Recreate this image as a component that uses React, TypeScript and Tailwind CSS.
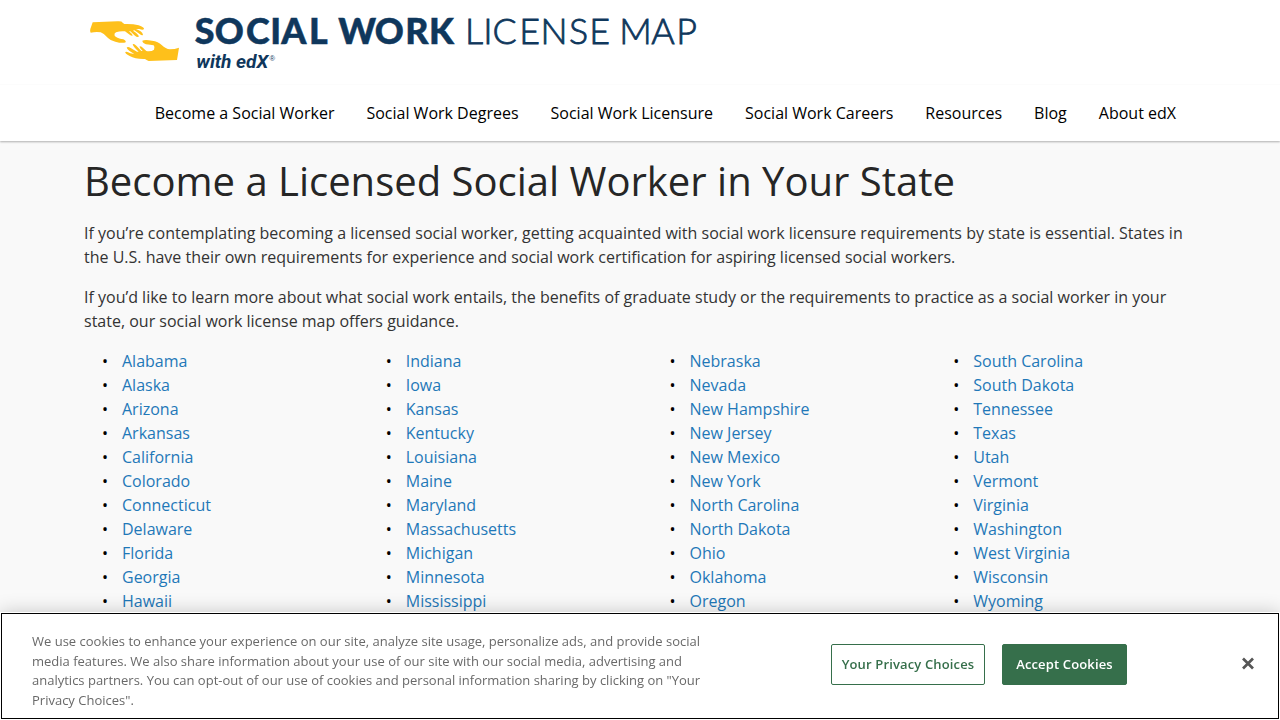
const NAV_ITEMS = [
  'Become a Social Worker',
  'Social Work Degrees',
  'Social Work Licensure',
  'Social Work Careers',
  'Resources',
  'Blog',
  'About edX',
];

const STATE_COLUMNS = [
  ['Alabama', 'Alaska', 'Arizona', 'Arkansas', 'California', 'Colorado', 'Connecticut', 'Delaware', 'Florida', 'Georgia', 'Hawaii'],
  ['Indiana', 'Iowa', 'Kansas', 'Kentucky', 'Louisiana', 'Maine', 'Maryland', 'Massachusetts', 'Michigan', 'Minnesota', 'Mississippi'],
  ['Nebraska', 'Nevada', 'New Hampshire', 'New Jersey', 'New Mexico', 'New York', 'North Carolina', 'North Dakota', 'Ohio', 'Oklahoma', 'Oregon'],
  ['South Carolina', 'South Dakota', 'Tennessee', 'Texas', 'Utah', 'Vermont', 'Virginia', 'Washington', 'West Virginia', 'Wisconsin', 'Wyoming'],
];

function Logo() {
  return (
    <svg width="620" height="65" viewBox="0 0 620 65" role="img" aria-label="Social Work License Map">
      {/* hands */}
      <g transform="scale(0.33333)" fill="#fec01b">
        <path d="M38 37 L112 34 Q126 33 128 38 L133 42 Q158 41 176 46 Q193 52 192 57 Q189 61 178 57 L168 57 Q187 64 189 74 Q187 79 179 72 L163 61 L159 62 Q174 72 177 79 Q173 84 165 77 L151 64 L147 64 Q157 72 158 77 Q153 79 146 72 L135 64 Q121 62 108 67 Q101 71 104 77 Q108 84 130 88 Q139 93 137 97 Q127 101 106 95 Q91 92 84 84 Q75 72 62 67 Q48 65 32 68 Q29 65 31 57 Z" />
        <path d="M297 113 L291 150 L206 153 Q199 150 195 147 Q166 148 149 138 Q134 130 136 126 Q140 123 151 130 L163 132 Q144 121 140 113 Q143 108 152 114 L171 125 L176 125 Q159 110 158 103 Q162 100 169 107 L184 123 L188 123 Q178 114 179 109 Q184 108 190 115 L199 123 Q214 125 222 119 Q226 112 221 106 Q211 104 198 103 Q187 98 187 92 Q195 88 216 92 Q235 94 245 105 Q257 117 270 118 Q284 118 297 113 Z" />
      </g>
      <g fill="#0f375c" stroke="#0f375c">
        {/* every letter has its own x to get the wordmark's spacing */}
        <g fontFamily="Lato, sans-serif" fontSize="35.8">
          <g fontWeight="900" strokeWidth="0.5">
            <text x="114.8 134.8 166 190.3 201.2 229" y="34">SOCIAL</text>
            <text x="258.2 294.8 325.3 349" y="34">WORK</text>
          </g>
          <g fontWeight="300" strokeWidth="0.8">
            <text x="385 403.3 412.6 439.3 460.5 489 509.3" y="34">LICENSE</text>
            <text x="539.3 571.3 596.2" y="34">MAP</text>
          </g>
        </g>
        <text x="116.3" y="58" textLength="72" lengthAdjust="spacingAndGlyphs" fontFamily="Roboto, sans-serif" fontSize="17.5" fontStyle="italic" fontWeight="700" stroke="none">with edX</text>
        <text x="189.5" y="51" fontFamily="'Liberation Sans', sans-serif" fontSize="7.5" stroke="none">®</text>
      </g>
    </svg>
  );
}

function CookieBanner() {
  return (
    <div className="fixed inset-x-0 bottom-0 h-[108px] bg-white p-px shadow-[0_0_18px_rgba(0,0,0,0.2)]">
      <div className="flex h-full items-start border border-black pl-[30px]">
        <p className="mt-[18px] w-[690px] text-[13px] leading-[19.5px] text-[#696969]">
          We use cookies to enhance your experience on our site, analyze site usage, personalize ads, and provide social
          media features. We also share information about your use of our site with our social media, advertising and
          analytics partners. You can opt-out of our use of cookies and personal information sharing by clicking on "Your
          Privacy Choices".
        </p>
        <div className="mt-[29.5px] ml-[109px] flex gap-[17px] text-[13px] font-semibold tracking-[0.15px]">
          <button className="h-[41.5px] w-[154px] rounded-xs border border-[#366f4b] whitespace-nowrap text-[#366f4b]">
            Your Privacy Choices
          </button>
          <button className="h-[41.5px] w-[125px] rounded-xs border border-[#366f4b] bg-[#366f4b] whitespace-nowrap text-white">
            Accept Cookies
          </button>
        </div>
        <button aria-label="Close" className="mt-[43px] ml-[115px]">
          <svg width="12" height="13" viewBox="0 0 12 13" stroke="#565656" strokeWidth="2.7">
            <path d="M1 1.5 L11 11.5 M11 1.5 L1 11.5" />
          </svg>
        </button>
      </div>
    </div>
  );
}

export default function App() {
  return (
    <div className="h-screen overflow-hidden bg-[#f9f9f9] font-['Open_Sans',sans-serif] text-base text-black">
      <header className="h-[141px] bg-white shadow-[0_1px_2px_rgba(0,0,0,0.3)]">
        <div className="h-[85px] border-b border-[#fcfcfc] pt-[10px] pl-[80px]">
          <Logo />
        </div>
        <nav className="flex justify-end gap-8 pt-4 pr-[104px]">
          {NAV_ITEMS.map((item) => (
            <a key={item} href="#" className="whitespace-nowrap">
              {item}
            </a>
          ))}
        </nav>
      </header>

      <main className="mx-[84px]">
        <h1 className="pt-[16px] text-[40px] leading-[48px] whitespace-nowrap text-[#262626]">
          Become a Licensed Social Worker in Your State
        </h1>
        <div className="mt-4 space-y-4 leading-6 text-[#333]">
          <p>
            If you’re contemplating becoming a licensed social worker, getting acquainted with social work licensure
            requirements by state is essential. States in the U.S. have their own requirements for experience and social
            work certification for aspiring licensed social workers.
          </p>
          <p>
            If you’d like to learn more about what social work entails, the benefits of graduate study or the
            requirements to practice as a social worker in your state, our social work license map offers guidance.
          </p>
        </div>
        <div className="mt-4 grid grid-cols-4 gap-[23px]">
          {STATE_COLUMNS.map((states) => (
            <ul key={states[0]} className="pl-[18px]">
              {states.map((state) => (
                <li key={state} className="flex leading-6">
                  <span className="w-5">•</span>
                  <a href="#" className="text-[#1f78b8]">
                    {state}
                  </a>
                </li>
              ))}
            </ul>
          ))}
        </div>
      </main>

      <CookieBanner />
    </div>
  );
}
